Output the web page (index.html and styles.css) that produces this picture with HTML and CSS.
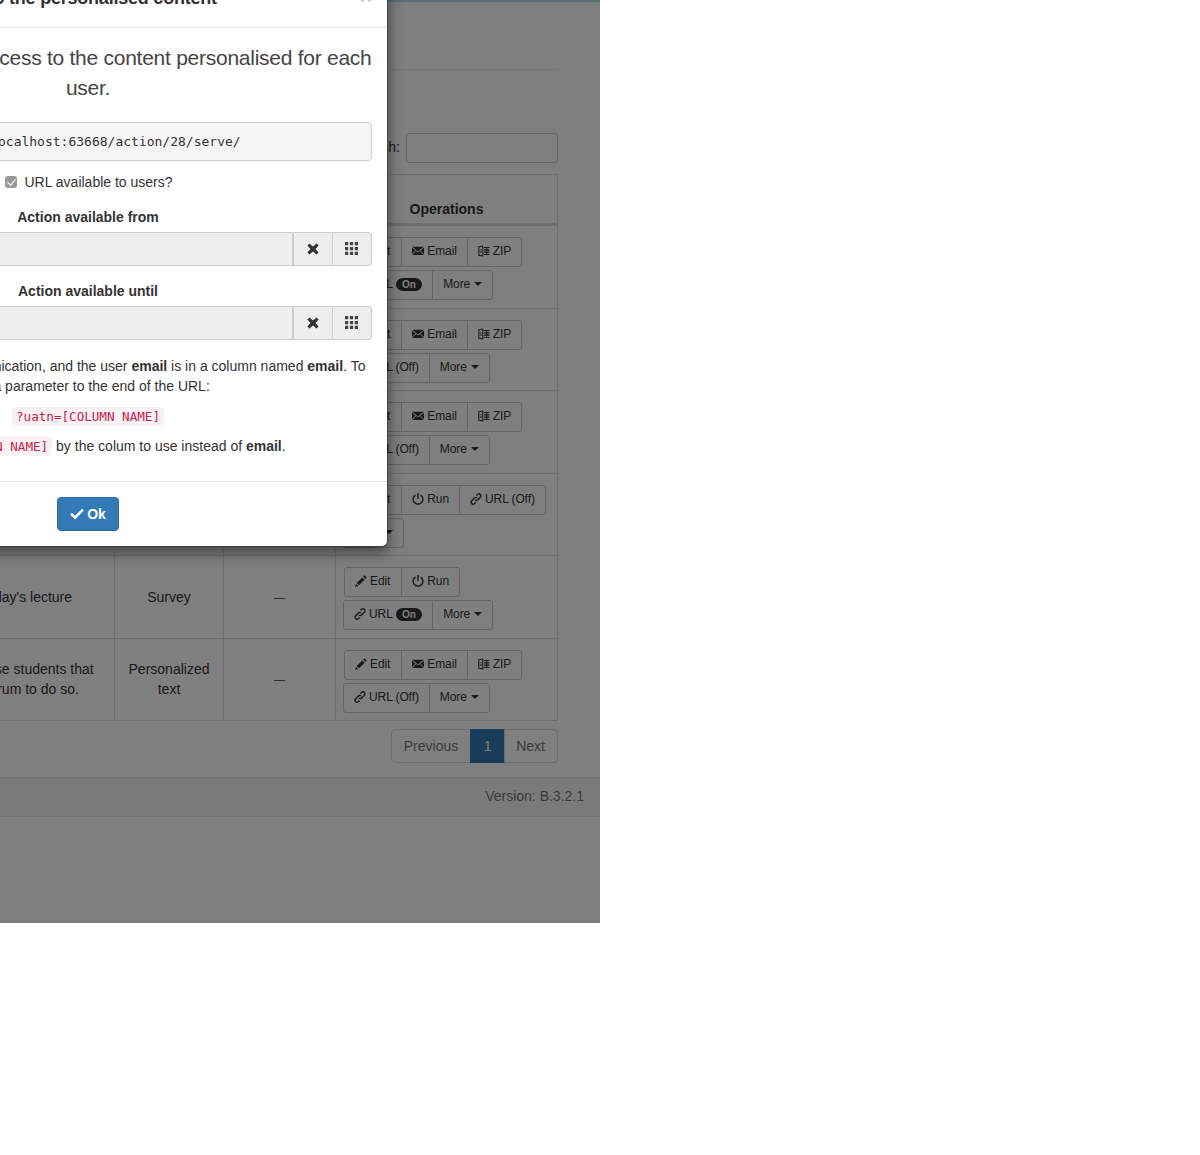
FILE: index.html
```html
<!DOCTYPE html>
<html lang="en">
<head>
    <meta charset="UTF-8">
    <meta name="viewport" content="width=device-width, initial-scale=1.0">
    <title>Actions</title>
    <link rel="stylesheet" href="styles.css">
</head>
<body>

<svg class="icon-defs" aria-hidden="true">
    <symbol id="i-pencil" viewBox="0 0 12 12"><path d="M9.400.3l2.300 2.300-1.300 1.300-2.300-2.300zM7.300 2.400l2.300 2.300-5.600 5.600-2.300-2.300zM1.100 8.800l2.100 2.100-.8.300L0 12l.8-2.400z"/></symbol>
    <symbol id="i-mail" viewBox="0 0 12 12"><path d="M.3 1.800h11.400L6 6.600zM0 2.500l3.600 3L0 9.300zM12 2.500v6.800L8.400 5.500zM4.200 6l1.800 1.500L7.800 6l3.900 4H.3z"/></symbol>
    <symbol id="i-zip" viewBox="0 0 12 12"><path fill-rule="evenodd" d="M.3 1.300L5.300.4v11.200l-5-.9zm1 .9v7.600l3 .5V1.600zM6 2h5.500v1.100H9.200v1.200h2.300v1.100H9.200v1.200h2.300v1.100H9.200v1.200h2.300V10H6V8.900h2.200V7.700H6V6.600h2.200V5.400H6V4.300h2.200V3.100H6zM1.700 4.400h2.200v.9H1.700zm0 2.200h2.200v.9H1.700z"/></symbol>
    <symbol id="i-power" viewBox="0 0 12 12"><path d="M5.300 0h1.400v6H5.300zM3.500 1.300v1.600a4.200 4.200 0 1 0 5 0V1.300a5.600 5.600 0 1 1-5 0z"/></symbol>
    <symbol id="i-link" viewBox="0 0 12 12"><path fill="none" stroke="currentColor" stroke-width="1.400" d="M5 7a1.800 1.800 0 0 0 2.600 0l2.900-3A2 2 0 0 0 7.700 1.200L6.300 2.600M7 5a1.800 1.800 0 0 0-2.600 0l-2.900 3a2 2 0 0 0 2.800 2.800l1.400-1.400"/></symbol>
    <symbol id="i-remove" viewBox="0 0 12 12"><path d="M2.400.4L6 3.500 9.600.4l2 2L8.500 6l3.100 3.600-2 2L6 8.500l-3.600 3.100-2-2L3.500 6 .4 2.400z"/></symbol>
    <symbol id="i-th" viewBox="0 0 12 12"><path d="M0 0h3v3H0zm4.500 0h3v3h-3zM9 0h3v3H9zM0 4.500h3v3H0zm4.500 0h3v3h-3zm4.500 0h3v3H9zM0 9h3v3H0zm4.500 0h3v3h-3zM9 9h3v3H9z"/></symbol>
    <symbol id="i-ok" viewBox="0 0 14 12"><path d="M1.900 4.700L5 7.800 12 .8l1.800 1.800L5 11.400.1 6.500z"/></symbol>
</svg>

<div class="page">
    <div class="top-line"></div>
    <div class="page-head"></div>

    <div class="search-row">
        <label class="search-label">Search:</label>
        <input class="search-input" type="text">
    </div>

    <table class="action-table">
        <colgroup>
            <col class="col-name">
            <col class="col-type">
            <col class="col-date">
            <col class="col-ops">
        </colgroup>
        <thead>
            <tr>
                <th>Description</th>
                <th>Type</th>
                <th>Last executed</th>
                <th>Operations</th>
            </tr>
        </thead>
        <tbody>
            <tr>
                <td>Send the midterm marks</td>
                <td>Personalized text</td>
                <td class="no-date">&mdash;</td>
                <td class="ops-cell">
                    <div class="ops">
                        <div class="btn-group">
                            <a class="btn"><svg class="ico"><use href="#i-pencil"/></svg>Edit</a>
                            <a class="btn"><svg class="ico"><use href="#i-mail"/></svg>Email</a>
                            <a class="btn"><svg class="ico"><use href="#i-zip"/></svg>ZIP</a>
                        </div>
                        <div class="btn-group second">
                            <a class="btn"><svg class="ico"><use href="#i-link"/></svg>URL <span class="badge">On</span></a>
                            <a class="btn">More <span class="caret"></span></a>
                        </div>
                    </div>
                </td>
            </tr>
            <tr>
                <td>Send the exam timetable</td>
                <td>Personalized text</td>
                <td class="no-date">&mdash;</td>
                <td class="ops-cell">
                    <div class="ops">
                        <div class="btn-group">
                            <a class="btn"><svg class="ico"><use href="#i-pencil"/></svg>Edit</a>
                            <a class="btn"><svg class="ico"><use href="#i-mail"/></svg>Email</a>
                            <a class="btn"><svg class="ico"><use href="#i-zip"/></svg>ZIP</a>
                        </div>
                        <div class="btn-group second">
                            <a class="btn"><svg class="ico"><use href="#i-link"/></svg>URL (Off)</a>
                            <a class="btn">More <span class="caret"></span></a>
                        </div>
                    </div>
                </td>
            </tr>
            <tr>
                <td>Send the project feedback</td>
                <td>Personalized text</td>
                <td class="no-date">&mdash;</td>
                <td class="ops-cell">
                    <div class="ops">
                        <div class="btn-group">
                            <a class="btn"><svg class="ico"><use href="#i-pencil"/></svg>Edit</a>
                            <a class="btn"><svg class="ico"><use href="#i-mail"/></svg>Email</a>
                            <a class="btn"><svg class="ico"><use href="#i-zip"/></svg>ZIP</a>
                        </div>
                        <div class="btn-group second">
                            <a class="btn"><svg class="ico"><use href="#i-link"/></svg>URL (Off)</a>
                            <a class="btn">More <span class="caret"></span></a>
                        </div>
                    </div>
                </td>
            </tr>
            <tr>
                <td>Survey on the first lab</td>
                <td>Survey</td>
                <td class="no-date">&mdash;</td>
                <td class="ops-cell">
                    <div class="ops">
                        <div class="btn-group">
                            <a class="btn"><svg class="ico"><use href="#i-pencil"/></svg>Edit</a>
                            <a class="btn"><svg class="ico"><use href="#i-power"/></svg>Run</a>
                            <a class="btn"><svg class="ico"><use href="#i-link"/></svg>URL (Off)</a>
                        </div>
                        <div class="btn-group second">
                            <a class="btn">More <span class="caret"></span></a>
                        </div>
                    </div>
                </td>
            </tr>
            <tr>
                <td>Opinion survey of yesterday's lecture</td>
                <td>Survey</td>
                <td class="no-date">&mdash;</td>
                <td class="ops-cell">
                    <div class="ops">
                        <div class="btn-group">
                            <a class="btn"><svg class="ico"><use href="#i-pencil"/></svg>Edit</a>
                            <a class="btn"><svg class="ico"><use href="#i-power"/></svg>Run</a>
                        </div>
                        <div class="btn-group second">
                            <a class="btn"><svg class="ico"><use href="#i-link"/></svg>URL <span class="badge">On</span></a>
                            <a class="btn">More <span class="caret"></span></a>
                        </div>
                    </div>
                </td>
            </tr>
            <tr>
                <td>Message sent only to all those students that<br>have not even used the forum to do so.</td>
                <td>Personalized text</td>
                <td class="no-date">&mdash;</td>
                <td class="ops-cell">
                    <div class="ops">
                        <div class="btn-group">
                            <a class="btn"><svg class="ico"><use href="#i-pencil"/></svg>Edit</a>
                            <a class="btn"><svg class="ico"><use href="#i-mail"/></svg>Email</a>
                            <a class="btn"><svg class="ico"><use href="#i-zip"/></svg>ZIP</a>
                        </div>
                        <div class="btn-group second">
                            <a class="btn"><svg class="ico"><use href="#i-link"/></svg>URL (Off)</a>
                            <a class="btn">More <span class="caret"></span></a>
                        </div>
                    </div>
                </td>
            </tr>
        </tbody>
    </table>

    <div class="pagination">
        <a class="page-link">Previous</a>
        <a class="page-link active">1</a>
        <a class="page-link">Next</a>
    </div>

    <div class="footer">Version: B.3.2.1</div>

    <!-- backdrop sits over everything in the page, modal over the backdrop -->
    <div class="backdrop"></div>

    <div class="modal">
        <div class="modal-header">
            <span class="close">&times;</span>
            <h4>URL to the personalised content</h4>
        </div>
        <div class="modal-body">
            <p class="lead">This URL provides access to the content personalised for each user.</p>
            <pre class="url-box">http://localhost:63668/action/28/serve/</pre>
            <div class="check-row">
                <input type="checkbox" checked disabled>
                <label>URL available to users?</label>
            </div>
            <div class="form-group">
                <label>Action available from</label>
                <div class="input-group">
                    <input type="text" disabled>
                    <span class="addon"><svg class="addon-ico"><use href="#i-remove"/></svg></span>
                    <span class="addon"><svg class="addon-ico grid"><use href="#i-th"/></svg></span>
                </div>
            </div>
            <div class="form-group last">
                <label>Action available until</label>
                <div class="input-group">
                    <input type="text" disabled>
                    <span class="addon"><svg class="addon-ico"><use href="#i-remove"/></svg></span>
                    <span class="addon"><svg class="addon-ico grid"><use href="#i-th"/></svg></span>
                </div>
            </div>
            <p>If the URL is sent in a communication, and the user <b>email</b> is in a column named <b>email</b>. To add a parameter to the end of the URL:</p>
            <p><code>?uatn=[COLUMN NAME]</code></p>
            <p>Replace <code>[COLUMN NAME]</code> by the colum to use instead of <b>email</b>.</p>
        </div>
        <div class="modal-footer">
            <a class="btn-ok"><svg class="ok-ico"><use href="#i-ok"/></svg>Ok</a>
        </div>
    </div>
</div>

</body>
</html>
```

FILE: styles.css
```css
* {
    box-sizing: border-box;
}
body {
    margin: 0;
    background-color: #fff;
    font-family: "Liberation Sans", Arial, sans-serif;
    font-size: 14px;
    line-height: 20px;
    color: #333;
}
.icon-defs {
    display: none;
}
.page {
    position: relative;
    width: 600px;
    height: 923px;
    overflow: hidden;
    background-color: #fff;
}
.backdrop {
    position: absolute;
    top: 0;
    left: 0;
    width: 100%;
    height: 100%;
    background-color: rgba(0, 0, 0, 0.5);
}
.top-line {
    height: 2px;
    background-color: #bcdde8;
}
.page-head {
    height: 68px;
    margin-right: 42px;
    border-bottom: 1px solid #eee;
}
.search-row {
    display: flex;
    justify-content: flex-end;
    align-items: center;
    gap: 6px;
    height: 30px;
    margin: 63px 42px 11px 0;
}
.search-label {
    position: relative;
    top: -1px;
}
.search-input {
    width: 152px;
    height: 30px;
    border: 1px solid #ccc;
    border-radius: 3px;
}
.action-table {
    width: 758px;
    margin-left: -200px;
    border-collapse: collapse;
    table-layout: fixed;
    text-align: center;
}
.col-name {
    width: 314px;
}
.col-type {
    width: 109px;
}
.col-date {
    width: 112px;
}
.action-table th,
.action-table td {
    border: 1px solid #ddd;
    padding: 8px;
}
.action-table th {
    height: 50px;
    padding-bottom: 4px;
    vertical-align: bottom;
    border-bottom: 3px solid #ddd;
}
.action-table td {
    height: 82.5px;
    vertical-align: middle;
}
.action-table .no-date {
    font-size: 11px;
}
.action-table .ops-cell {
    padding: 11px 8px 7.5px;
}
.ops {
    display: flex;
    flex-wrap: wrap;
    gap: 3px 0;
    width: 210px;
    font-size: 12px;
    line-height: 18px;
    letter-spacing: -0.1px;
}
.btn-group {
    display: flex;
    flex: 0 0 100%;
}
.btn-group.second {
    margin-left: -1px;
}
.btn {
    display: flex;
    align-items: center;
    height: 30px;
    padding: 4px 10px 6px;
    border: 1px solid #ccc;
    margin-left: -1px;
    white-space: pre;
}
.btn-group .btn:first-child {
    margin-left: 0;
    border-radius: 3px 0 0 3px;
}
.btn-group:first-child .btn:first-child {
    padding-right: 11px;
}
.btn-group .btn:last-child {
    border-radius: 0 3px 3px 0;
}
.btn-group .btn:only-child {
    border-radius: 3px;
}
.ico {
    width: 12px;
    height: 12px;
    margin-right: 3px;
    fill: currentColor;
    flex: none;
}
.badge {
    display: inline-block;
    height: 13px;
    padding: 0 6.5px;
    border-radius: 7px;
    background-color: #333;
    color: #fff;
    font-size: 10px;
    font-weight: bold;
    line-height: 13px;
}
.caret {
    display: inline-block;
    width: 0;
    height: 0;
    margin-left: 1px;
    border-top: 4px solid #333;
    border-left: 4px solid transparent;
    border-right: 4px solid transparent;
}
.pagination {
    display: flex;
    justify-content: flex-end;
    height: 34px;
    margin: 8px 42px 14px 0;
}
.page-link {
    padding: 6px 12px;
    border: 1px solid #ddd;
    margin-left: -1px;
    color: #777;
}
.page-link:first-child {
    border-radius: 4px 0 0 4px;
}
.page-link:last-child {
    padding-left: 11px;
    border-radius: 0 4px 4px 0;
}
.page-link.active {
    min-width: 35px;
    background-color: #337ab7;
    border-color: #337ab7;
    color: #fff;
    text-align: center;
}
.footer {
    height: 40px;
    padding: 8px 16px;
    background-color: #f5f5f5;
    border-top: 1px solid #e7e7e7;
    border-bottom: 1px solid #e7e7e7;
    color: #777;
    text-align: right;
}
.modal {
    position: absolute;
    top: -30px;
    left: -212px;
    width: 600px;
    background-color: #fff;
    border: 1px solid rgba(0, 0, 0, 0.2);
    border-radius: 6px;
    box-shadow: 0 5px 15px rgba(0, 0, 0, 0.5);
    background-clip: padding-box;
    text-align: center;
}
.modal-header {
    padding: 15px;
    border-bottom: 1px solid #e5e5e5;
}
.modal-header h4 {
    margin: 0;
    font-size: 18px;
    line-height: 25.7px;
    font-weight: bold;
    letter-spacing: -0.22px;
}
.close {
    float: right;
    font-size: 21px;
    font-weight: bold;
    line-height: 21px;
    color: #000;
    opacity: 0.2;
}
.modal-body {
    padding: 15px;
}
.modal-body p {
    margin: 0 0 10px;
}
.modal-body .lead {
    margin: 0 0 19px;
    font-size: 21px;
    line-height: 30px;
    font-weight: 300;
    letter-spacing: -0.26px;
    color: #444;
}
.url-box {
    height: 39px;
    margin: 0 0 11px;
    padding: 10px 9.5px 9px;
    background-color: #f5f5f5;
    border: 1px solid #ccc;
    border-radius: 4px;
    font-family: "DejaVu Sans Mono", monospace;
    font-size: 13px;
    line-height: 18.5px;
    text-align: center;
}
.check-row {
    display: flex;
    justify-content: center;
    align-items: center;
    height: 20px;
    margin-bottom: 15px;
    padding-left: 2px;
}
/* the native disabled box is too pale */
.check-row input {
    appearance: none;
    position: relative;
    width: 12px;
    height: 12px;
    margin: 0 7px 0 0;
    background-color: #999;
    border-radius: 3px;
}
.check-row input::after {
    content: "";
    position: absolute;
    top: 1.5px;
    left: 4px;
    width: 4px;
    height: 7px;
    border: solid #fff;
    border-width: 0 1.5px 1.5px 0;
    transform: rotate(40deg);
}
.form-group {
    margin-bottom: 15px;
}
.form-group.last {
    margin-bottom: 16px;
}
.form-group label {
    display: block;
    margin-bottom: 5px;
    font-weight: bold;
}
.input-group {
    display: flex;
    height: 34px;
}
.input-group input {
    flex: 1;
    min-width: 0;
    padding: 6px 12px;
    background-color: #eee;
    border: 1px solid #ccc;
    border-radius: 4px 0 0 4px;
}
.addon {
    display: flex;
    justify-content: center;
    align-items: center;
    width: 39px;
    background-color: #eee;
    border: 1px solid #ccc;
    border-left: 0;
}
.input-group input + .addon {
    width: 40px;
    border-left: 1px solid #ccc;
}
.addon:last-child {
    border-radius: 0 4px 4px 0;
}
.addon-ico {
    width: 12px;
    height: 12px;
    fill: #333;
}
.addon-ico.grid {
    width: 13px;
    height: 13px;
    margin-right: 2px;
    fill: #444;
}
code {
    padding: 2px 4px;
    background-color: #f9f2f4;
    border-radius: 4px;
    color: #c7254e;
    font-family: "DejaVu Sans Mono", monospace;
    font-size: 12.6px;
    line-height: 1;
}
.modal-footer {
    padding: 15px;
    border-top: 1px solid #e5e5e5;
}
.btn-ok {
    display: inline-flex;
    align-items: center;
    height: 34px;
    padding: 6px 12px;
    background-color: #337ab7;
    border: 1px solid #2e6da4;
    border-radius: 4px;
    color: #fff;
    font-weight: bold;
}
.ok-ico {
    width: 14px;
    height: 12px;
    margin-right: 3px;
    fill: #fff;
}
```
